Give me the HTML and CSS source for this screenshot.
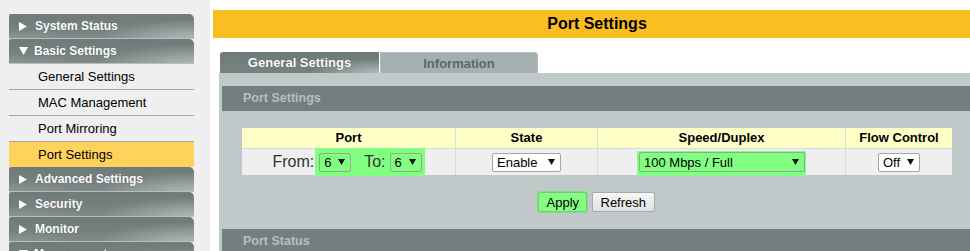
FILE: index.html
```html
<!DOCTYPE html>
<html>
<head>
<meta charset="utf-8">
<title>Port Settings</title>
<link rel="stylesheet" href="styles.css">
</head>
<body>
<div class="page">
  <nav class="sidebar">
    <div class="menu">
      <div class="menu-head"><svg class="tri" viewBox="0 0 8 9"><polygon points="0,0 8,4.5 0,9"/></svg><span>System Status</span></div>
      <div class="menu-head"><svg class="tri down" viewBox="0 0 9 8"><polygon points="0,0 9,0 4.5,8"/></svg><span>Basic Settings</span></div>
      <div class="menu-item">General Settings</div>
      <div class="menu-item">MAC Management</div>
      <div class="menu-item">Port Mirroring</div>
      <div class="menu-item active">Port Settings</div>
      <div class="menu-head"><svg class="tri" viewBox="0 0 8 9"><polygon points="0,0 8,4.5 0,9"/></svg><span>Advanced Settings</span></div>
      <div class="menu-head"><svg class="tri" viewBox="0 0 8 9"><polygon points="0,0 8,4.5 0,9"/></svg><span>Security</span></div>
      <div class="menu-head"><svg class="tri" viewBox="0 0 8 9"><polygon points="0,0 8,4.5 0,9"/></svg><span>Monitor</span></div>
      <div class="menu-head"><svg class="tri down" viewBox="0 0 9 8"><polygon points="0,0 9,0 4.5,8"/></svg><span>Management</span></div>
    </div>
  </nav>
  <main class="main">
    <div class="title">Port Settings</div>
    <div class="content">
      <div class="tabs">
        <div class="tab active">General Settings</div>
        <div class="tab">Information</div>
      </div>
      <div class="panel">
        <div class="section-head">Port Settings</div>
        <div class="grid">
          <div class="th">Port</div>
          <div class="th">State</div>
          <div class="th">Speed/Duplex</div>
          <div class="th">Flow Control</div>
          <div class="td">
            <span class="label">From:</span>
            <span class="hl hl-port">
              <span class="sel sel-port green"><span>6</span><svg class="arrow" viewBox="0 0 7 6"><polygon points="0,0 7,0 3.5,6"/></svg></span>
              <span class="label to">To:</span>
              <span class="sel sel-port green"><span>6</span><svg class="arrow" viewBox="0 0 7 6"><polygon points="0,0 7,0 3.5,6"/></svg></span>
            </span>
          </div>
          <div class="td">
            <span class="sel sel-state"><span>Enable</span><svg class="arrow" viewBox="0 0 7 6"><polygon points="0,0 7,0 3.5,6"/></svg></span>
          </div>
          <div class="td td-top">
            <span class="hl hl-speed">
              <span class="sel sel-speed green"><span>100 Mbps / Full</span><svg class="arrow" viewBox="0 0 7 6"><polygon points="0,0 7,0 3.5,6"/></svg></span>
            </span>
          </div>
          <div class="td">
            <span class="sel sel-flow"><span>Off</span><svg class="arrow" viewBox="0 0 7 6"><polygon points="0,0 7,0 3.5,6"/></svg></span>
          </div>
        </div>
        <div class="buttons">
          <button class="btn apply">Apply</button>
          <button class="btn">Refresh</button>
        </div>
        <div class="section-head">Port Status</div>
      </div>
    </div>
  </main>
</div>
</body>
</html>
```

FILE: styles.css
```css
html, body {
  margin: 0;
  padding: 0;
  overflow: hidden;
  background: #ffffff;
}

body {
  font-family: "Liberation Sans", Arial, sans-serif;
  font-size: 13px;
  color: #000;
}

.page {
  display: flex;
  min-height: 251px;
}

/* ---------- sidebar ---------- */
.sidebar {
  width: 210px;
  flex: none;
  box-sizing: border-box;
  background: #efefef;
  padding: 14px 0 0 9px;
}

.menu {
  width: 185px;
}

.menu-head {
  height: 24px;
  border-bottom: 1px solid #b7bfbe;
  border-radius: 2px 5px 0 0;
  display: flex;
  align-items: center;
  padding-left: 10px;
  color: #ffffff;
  font-weight: bold;
  font-size: 12px;
  text-shadow: 0 0 1px #4c5756;
  background:
    radial-gradient(ellipse 95px 20px at 100% 105%, rgba(190, 200, 199, 0.75), rgba(190, 200, 199, 0) 100%),
    radial-gradient(ellipse 70px 10px at 0% 100%, rgba(160, 170, 169, 0.35), rgba(160, 170, 169, 0) 100%),
    linear-gradient(#6f7b7a, #76817f 60%, #7f8a89);
}

.tri {
  width: 8px;
  height: 9px;
  margin-right: 8px;
  fill: #ffffff;
  flex: none;
}

.tri.down {
  width: 9px;
  height: 8px;
  margin-right: 6px;
}

.menu-item {
  height: 25px;
  line-height: 25px;
  border-bottom: 1px solid #a4a4a4;
  padding-left: 29px;
  font-size: 13px;
  color: #000;
  background: #efefef;
}

.menu-item.active {
  background: #fdd35b;
  border-bottom: 0;
}

/* ---------- main ---------- */
.main {
  flex: 1;
  min-width: 0;
  padding: 10px 0 0 3px;
}

.title {
  height: 28px;
  line-height: 28px;
  background: #fabe22;
  text-align: center;
  font-weight: bold;
  font-size: 16px;
  color: #000;
  padding-left: 11px;
}

.content {
  margin: 14px 0 0 6px;
}

.tabs {
  display: flex;
  margin-left: 1px;
  height: 21px;
}

.tab {
  width: 158px;
  height: 21px;
  line-height: 21px;
  text-align: center;
  font-weight: bold;
  font-size: 13px;
  box-sizing: border-box;
}

.tab.active {
  width: 159px;
  margin-right: 1px;
  color: #ffffff;
  border-radius: 3px 0 0 0;
  text-shadow: 0 0 1px #3f4948;
  background:
    radial-gradient(ellipse 70px 14px at 100% 100%, rgba(190, 200, 199, 0.8), rgba(190, 200, 199, 0) 100%),
    linear-gradient(#6f7b7a, #77827f);
}

.tab:not(.active) {
  color: #5b6868;
  background: #a5b1b1;
  border: 1px solid #b3bdbd;
  border-bottom: 0;
  border-radius: 0 4px 0 0;
}

.panel {
  background: #c0c8c9;
  padding: 13px 0 0 3px;
}

.section-head {
  height: 25px;
  line-height: 25px;
  padding-left: 21px;
  background: #737f7e;
  color: #b5bfbf;
  font-weight: bold;
  font-size: 12.5px;
}

/* ---------- table ---------- */
.grid {
  display: grid;
  grid-template-columns: 213px 141px 247px 1fr;
  grid-template-rows: 20px 26px;
  gap: 1px 1px;
  background: #d9dbdb;
  margin: 17px 18px 0 20px;
}

.th {
  background: #ffffc8;
  text-align: center;
  line-height: 20px;
  font-weight: bold;
  font-size: 13px;
}

.td {
  background: #efefef;
  display: flex;
  align-items: center;
  justify-content: center;
}

.td-top {
  align-items: flex-start;
}

.label {
  font-size: 16px;
  color: #333333;
}

.label.to {
  margin: 0 4px 0 13px;
}

.hl {
  background: #80ff80;
  display: inline-flex;
  align-items: center;
  box-sizing: border-box;
  flex: none;
}

.hl-port {
  height: 28px;
  padding: 0 3px 0 4px;
  margin-left: 1px;
}

.hl-speed {
  height: 25px;
  margin-top: 2px;
  padding: 1px 1px 4px 2px;
  align-items: flex-start;
}

.sel {
  display: inline-flex;
  align-items: center;
  justify-content: space-between;
  box-sizing: border-box;
  height: 19px;
  border: 1px solid #a5a5a5;
  border-radius: 2px;
  background: #ffffff;
  padding: 0 5px 0 4px;
  font-size: 13px;
  color: #000;
  flex: none;
}

.sel.green {
  background: #80ff80;
  border-color: #8fa88f;
}

.arrow {
  width: 7px;
  height: 6px;
  fill: #111;
  flex: none;
}

.sel-port { width: 32px; }
.sel-state { width: 69px; }
.sel-speed { width: 166px; height: 20px; }
.sel-flow { width: 42px; }

/* ---------- buttons ---------- */
.buttons {
  display: flex;
  justify-content: center;
  align-items: center;
  gap: 5px;
  margin: 16px 0 16px;
  height: 22px;
}

.btn {
  font-family: "Liberation Sans", Arial, sans-serif;
  font-size: 13px;
  color: #000;
  height: 20px;
  padding: 0 8px;
  border: 1px solid #a9a9a9;
  border-radius: 2px;
  background: linear-gradient(#f7f7f7, #e0e0e0);
  box-sizing: border-box;
}

.btn.apply {
  width: 49px;
  background: #80ff80;
  border-color: #8fb88f;
  box-shadow: 0 0 0 1px #7ae67a;
}

.btn:not(.apply) {
  width: 63px;
}
```
